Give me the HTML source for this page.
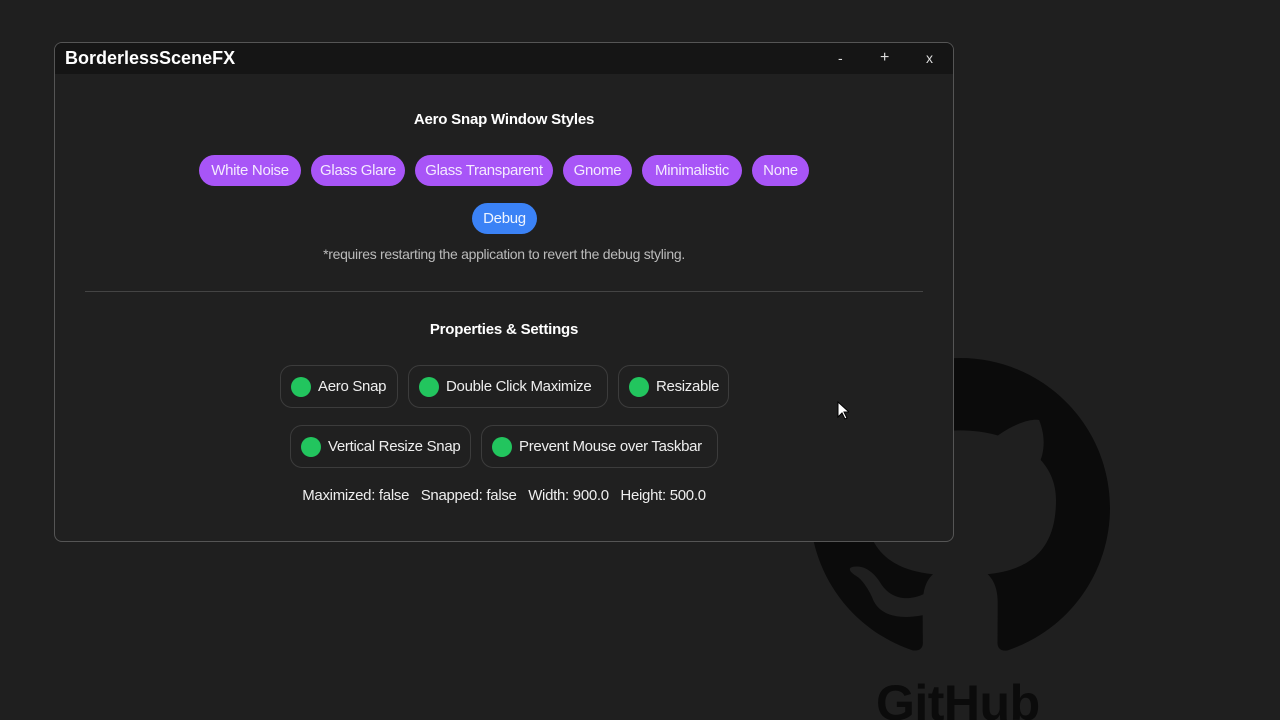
<!DOCTYPE html>
<html><head><meta charset="utf-8"><style>
*{margin:0;padding:0;box-sizing:border-box}
html,body{width:1280px;height:720px;overflow:hidden}
body{background:#1f1f1f;position:relative;font-family:"Liberation Sans",sans-serif;color:#fff}
.a{position:absolute}
.c{display:flex;align-items:center;justify-content:center;white-space:nowrap}
.p{background:#a855f7;border-radius:16px;height:31px;top:155px;font-size:15px;color:#f4eaff;letter-spacing:-0.3px}
.t{border:1px solid #3c3c3c;border-radius:12px;height:43px;font-size:15px;color:#eee;justify-content:flex-start;padding-left:10px;letter-spacing:-0.3px}
.t i{display:inline-block;width:20px;height:20px;border-radius:50%;background:#22c55e;margin-right:7px;flex:none}
</style></head><body>
<svg class="a" style="left:810px;top:358px" width="300" height="300" viewBox="0 0 16 16"><path fill="#0b0b0b" fill-rule="evenodd" d="M8 0C3.58 0 0 3.58 0 8c0 3.54 2.29 6.53 5.47 7.59.4.07.55-.17.55-.38 0-.19-.01-.82-.01-1.49-2.01.37-2.53-.49-2.69-.94-.09-.23-.48-.94-.82-1.13-.28-.15-.68-.52-.01-.53.63-.01 1.08.58 1.23.82.72 1.21 1.87.87 2.330.66.07-.52.28-.87.51-1.07-1.78-.2-3.64-.89-3.64-3.95 0-.87.31-1.59.82-2.15-.08-.2-.36-1.02.08-2.12 0 0 .67-.21 2.2.82.64-.18 1.32-.27 2-.27.68 0 1.36.09 2 .27 1.53-1.04 2.2-.82 2.2-.82.44 1.1.16 1.92.08 2.12.51.56.82 1.27.82 2.15 0 3.07-1.87 3.75-3.65 3.95.29.25.54.73.54 1.48 0 1.07-.01 1.93-.01 2.2 0 .21.15.46.55.38A8.013 8.013 0 0016 8c0-4.42-3.58-8-8-8z"/></svg>
<div class="a" style="left:876px;top:674px;font-size:50px;font-weight:bold;color:#0b0b0b;letter-spacing:-0.5px">GitHub</div>
<div class="a" style="left:54px;top:42px;width:900px;height:500px;border:1px solid #555;border-radius:8px;background:#202020;overflow:hidden">
  <div class="a" style="left:0;top:0;width:898px;height:31px;background:#151515"></div>
  <div class="a" style="left:10px;top:5px;font-size:18px;font-weight:bold;color:#fff">BorderlessSceneFX</div>
  <div class="a" style="left:783px;top:7px;font-size:14px;color:#ddd">-</div>
  <div class="a" style="left:825px;top:6px;font-size:16px;color:#ddd">+</div>
  <div class="a" style="left:871px;top:7px;font-size:14px;color:#ddd">x</div>
</div>
<div class="a c" style="left:54px;width:900px;top:111px;font-size:15px;font-weight:bold;letter-spacing:-0.2px">Aero Snap Window Styles</div>
<div class="a c p" style="left:199px;width:102px">White Noise</div>
<div class="a c p" style="left:311px;width:94px">Glass Glare</div>
<div class="a c p" style="left:415px;width:138px">Glass Transparent</div>
<div class="a c p" style="left:563px;width:69px">Gnome</div>
<div class="a c p" style="left:642px;width:100px">Minimalistic</div>
<div class="a c p" style="left:752px;width:57px">None</div>
<div class="a c p" style="left:472px;width:65px;top:203px;background:#3b82f6;color:#eef4ff">Debug</div>
<div class="a c" style="left:54px;width:900px;top:246px;font-size:14px;color:#bbb;letter-spacing:-0.3px">*requires restarting the application to revert the debug styling.</div>
<div class="a" style="left:85px;top:291px;width:838px;height:1px;background:#444"></div>
<div class="a c" style="left:54px;width:900px;top:321px;font-size:15px;font-weight:bold;letter-spacing:-0.2px">Properties &amp; Settings</div>
<div class="a c t" style="left:280px;top:365px;width:118px"><i></i>Aero Snap</div>
<div class="a c t" style="left:408px;top:365px;width:200px"><i></i>Double Click Maximize</div>
<div class="a c t" style="left:618px;top:365px;width:111px"><i></i>Resizable</div>
<div class="a c t" style="left:290px;top:425px;width:181px"><i></i>Vertical Resize Snap</div>
<div class="a c t" style="left:481px;top:425px;width:237px"><i></i>Prevent Mouse over Taskbar</div>
<div class="a c" style="left:54px;width:900px;top:487px;font-size:15px;color:#eee;letter-spacing:-0.3px">Maximized: false&nbsp;&nbsp; Snapped: false&nbsp;&nbsp; Width: 900.0&nbsp;&nbsp; Height: 500.0</div>
<svg class="a" style="left:837px;top:401px" width="12" height="19" viewBox="0 0 12 19"><path d="M1 1v15l4-4 3 6 2-1-3-6h5z" fill="#fff" stroke="#000" stroke-width="1"/></svg>
</body></html>
